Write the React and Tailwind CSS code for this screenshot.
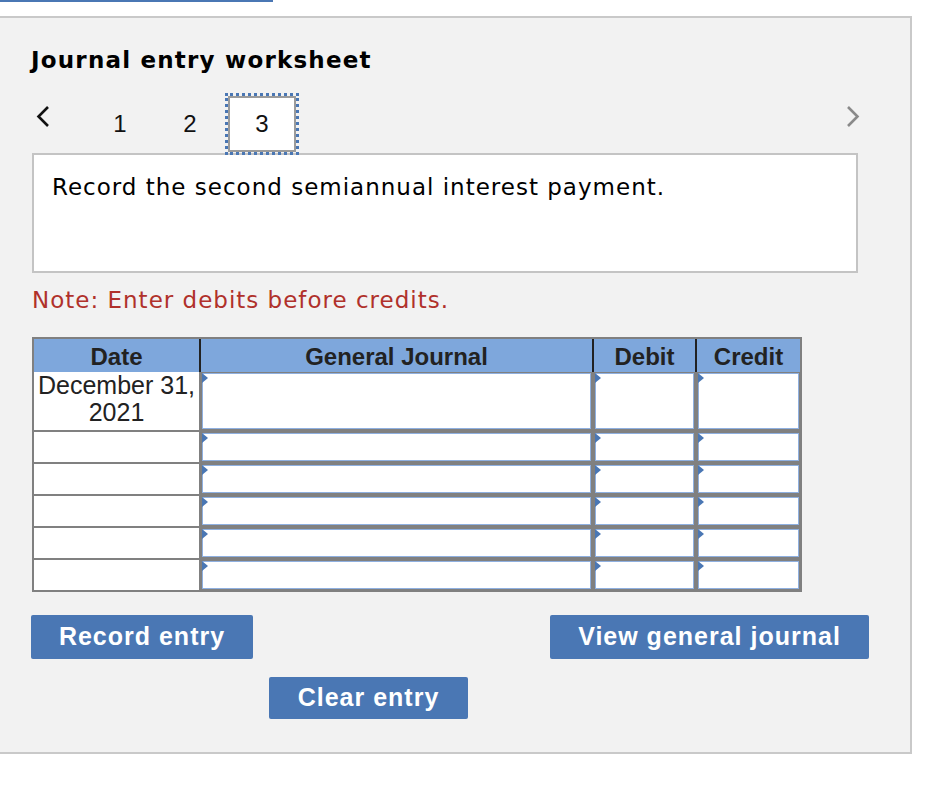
import React from "react";

const verdana = { fontFamily: '"DejaVu Sans", Verdana, sans-serif' };
const arial = { fontFamily: '"Liberation Sans", Arial, sans-serif' };

const cols = "grid grid-cols-[167px_393px_103px_103px]";

function InputCell({ last }) {
    return (
        <div className={"bg-[#808080] p-[1px] " + (last ? "" : "pr-[3px]")}>
            <div className="relative h-full bg-white border border-[#8fb0e0]">
                <span className="absolute -left-[1px] -top-[1px] w-0 h-0 border-t-[5px] border-b-[5px] border-l-[6px] border-t-transparent border-b-transparent border-l-[#4a77b4]"></span>
            </div>
        </div>
    );
}

function Row({ tall, date }) {
    return (
        <div className={cols + " " + (tall ? "h-[58px]" : "h-[30px] mt-[2px]")}>
            <div className="bg-white border-r-2 border-[#808080] text-[#222] text-[25px] leading-[27px] text-center" style={arial}>{date}</div>
            <InputCell />
            <InputCell />
            <InputCell last />
        </div>
    );
}

function HeadCell({ children, last }) {
    return (
        <div className={"bg-[#7ea7dc] border-b-2 border-[#222] flex items-center justify-center font-bold text-[24px] text-[#222] " + (last ? "" : "border-r-2")} style={arial}>
            {children}
        </div>
    );
}

export default function App() {
    return (
        <div className="w-[942px] h-[800px] bg-white overflow-hidden">
            <div className="h-[2px] w-[273px] bg-[#4a77b4]"></div>
            <div className="mt-[14px] w-[912px] h-[738px] bg-[#f2f2f2] border-t-2 border-r-2 border-b-2 border-[#c9c9c9] pl-[32px]">
                <h1 className="pt-[27px] text-[23px] tracking-[1.2px] font-bold text-black leading-[30px] -ml-[1px]" style={verdana}>Journal entry worksheet</h1>
                <div className="mt-[18px] flex items-center h-[62px] relative">
                    <span className="w-[24px] ml-[4px] -mt-[14px]">
                        <svg width="14" height="24" viewBox="0 0 14 24"><path d="M12 2 L2.5 11.5 L12 21" fill="none" stroke="#111" strokeWidth="2.6" /></svg>
                    </span>
                    <span className="ml-[50px] text-[24px] w-[20px] text-center text-[#111]" style={arial}>1</span>
                    <span className="ml-[50px] text-[24px] w-[20px] text-center text-[#111]" style={arial}>2</span>
                    <div className="ml-[25px] w-[74px] h-[62px] outline-dotted outline-[3px] -outline-offset-[3px] outline-[#4a77b4] p-[3px] relative z-10">
                        <div className="w-full h-full bg-white border-2 border-[#9b9b9b] flex items-center justify-center text-[24px] text-[#111]" style={arial}>3</div>
                    </div>
                    <span className="ml-auto mr-[50px] -mt-[14px]">
                        <svg width="14" height="24" viewBox="0 0 14 24"><path d="M2 2 L11.5 11.5 L2 21" fill="none" stroke="#8a8a8a" strokeWidth="2.6" /></svg>
                    </span>
                </div>
                <div className="-mt-[2px] w-[826px] h-[120px] bg-white border-2 border-[#c4c4c4] px-[18px] pt-[17px]">
                    <p className="text-[23px] tracking-[1px] text-black leading-[30px]" style={verdana}>Record the second semiannual interest payment.</p>
                </div>
                <p className="mt-[12px] text-[23px] tracking-[1px] text-[#b0312b] leading-[30px]" style={verdana}>Note: Enter debits before credits.</p>
                <div className="mt-[22px] w-[770px] bg-[#808080] p-[2px]">
                    <div className={cols + " h-[33px]"}>
                        <HeadCell>Date</HeadCell>
                        <HeadCell>General Journal</HeadCell>
                        <HeadCell>Debit</HeadCell>
                        <HeadCell last>Credit</HeadCell>
                    </div>
                    <Row tall date={<>December 31,<br />2021</>} />
                    <Row />
                    <Row />
                    <Row />
                    <Row />
                    <Row />
                </div>
                <div className="mt-[23px] flex justify-between w-[838px] -ml-[1px]">
                    <button className="w-[222px] h-[44px] bg-[#4a77b4] rounded-[2px] text-white font-bold text-[25px] tracking-[1px]" style={arial}>Record entry</button>
                    <button className="w-[319px] h-[44px] bg-[#4a77b4] rounded-[2px] text-white font-bold text-[25px] tracking-[1px]" style={arial}>View general journal</button>
                </div>
                <div className="mt-[18px] ml-[237px]">
                    <button className="w-[199px] h-[42px] bg-[#4a77b4] rounded-[2px] text-white font-bold text-[25px] tracking-[1px]" style={arial}>Clear entry</button>
                </div>
            </div>
        </div>
    );
}
